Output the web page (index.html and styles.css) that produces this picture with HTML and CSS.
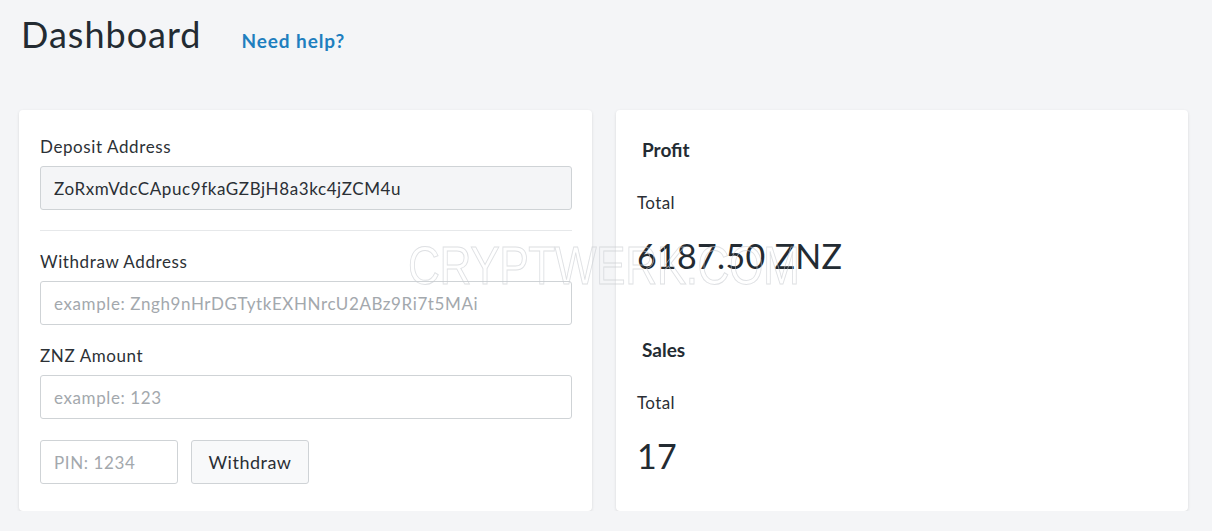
FILE: index.html
```html
<!DOCTYPE html>
<html lang="en">
<head>
    <meta charset="UTF-8">
    <meta name="viewport" content="width=device-width, initial-scale=1.0">
    <title>Dashboard</title>
    <link rel="stylesheet" href="styles.css">
</head>
<body>
    <div class="page-head">
        <h1>Dashboard</h1>
        <a href="#" class="help">Need help?</a>
    </div>

    <div class="panels">
        <div class="card wallet">
            <label>Deposit Address</label>
            <input type="text" class="field" value="ZoRxmVdcCApuc9fkaGZBjH8a3kc4jZCM4u" readonly>

            <hr>

            <label>Withdraw Address</label>
            <input type="text" class="field" placeholder="example: Zngh9nHrDGTytkEXHNrcU2ABz9Ri7t5MAi">

            <label>ZNZ Amount</label>
            <input type="text" class="field" placeholder="example: 123">

            <div class="actions">
                <input type="text" class="field pin" placeholder="PIN: 1234">
                <button class="btn">Withdraw</button>
            </div>
        </div>

        <div class="card stats">
            <div class="stat first">
                <h3>Profit</h3>
                <div class="stat-label">Total</div>
                <div class="stat-value">6187.50 ZNZ</div>
            </div>
            <div class="stat">
                <h3>Sales</h3>
                <div class="stat-label">Total</div>
                <div class="stat-value">17</div>
            </div>
        </div>
    </div>

    <div class="mark">CRYPTWERK.COM</div>
</body>
</html>
```

FILE: styles.css
```css
body {
    margin: 0;
    background: #f4f5f7;
    font-family: Lato, "Open Sans", sans-serif;
    color: #2a2f35;
}

.page-head {
    display: flex;
    align-items: baseline;
    padding: 12px 21px 0;
    height: 98px;
    box-sizing: border-box;
}

h1 {
    margin: 0;
    font-size: 36px;
    font-weight: 400;
    letter-spacing: 1px;
    color: #232b32;
}

.help {
    margin-left: 40px;
    font-size: 19px;
    font-weight: 700;
    letter-spacing: 0.9px;
    color: #1f7fbf;
    text-decoration: none;
}

.panels {
    display: grid;
    grid-template-columns: 573px 572px;
    gap: 24px;
    padding: 12px 0 0 19px;
}

.card {
    background: #fff;
    border-radius: 4px;
    box-shadow: 0 1px 3px rgba(0,0,0,0.12);
}

.wallet {
    padding: 27px 20px 27px 21px;
    display: flex;
    flex-direction: column;
}

label {
    font-size: 17px;
    line-height: 20px;
    letter-spacing: 0.6px;
    color: #2c3136;
    margin-bottom: 9px;
}

.field {
    box-sizing: border-box;
    height: 44px;
    padding: 0 13px;
    font-family: inherit;
    font-size: 17px;
    letter-spacing: 0.6px;
    color: #2a2f35;
    border: 1px solid #cfd3d6;
    border-radius: 3px;
    background: #fff;
    margin-bottom: 21px;
}

.field[readonly] {
    background: #f4f5f7;
}

.field::placeholder {
    color: #a3a8ad;
}

hr {
    border: none;
    border-top: 1px solid #e6e8ea;
    margin: -1px 0 21px;
    width: 100%;
}

.actions {
    display: flex;
    gap: 13px;
}

.pin {
    width: 138px;
    margin: 0;
}

.btn {
    width: 118px;
    height: 44px;
    font-family: inherit;
    font-size: 18px;
    letter-spacing: 0.5px;
    color: #2a2f35;
    background: #f8f9fa;
    border: 1px solid #cfd3d6;
    border-radius: 3px;
}

.stats {
    padding: 28px 21px;
}

.stat.first {
    height: 200px;
}

.stat h3 {
    margin: 0 0 32px 5px;
    font-size: 19px;
    line-height: 23px;
    font-weight: 700;
    color: #232b32;
}

.stat-label {
    font-size: 17px;
    line-height: 20px;
    letter-spacing: 0.4px;
    margin-bottom: 20px;
}

.stat-value {
    font-size: 34px;
    line-height: 46px;
    letter-spacing: 0.3px;
    color: #232b32;
}

/* site watermark */
.mark {
    position: absolute;
    left: 408px;
    top: 234px;
    font-family: "Liberation Sans", sans-serif;
    font-size: 54px;
    letter-spacing: -0.6px;
    color: transparent;
    -webkit-text-stroke: 1px rgba(200, 204, 208, 0.6);
    transform: scaleX(0.82);
    transform-origin: left top;
    pointer-events: none;
}
```
